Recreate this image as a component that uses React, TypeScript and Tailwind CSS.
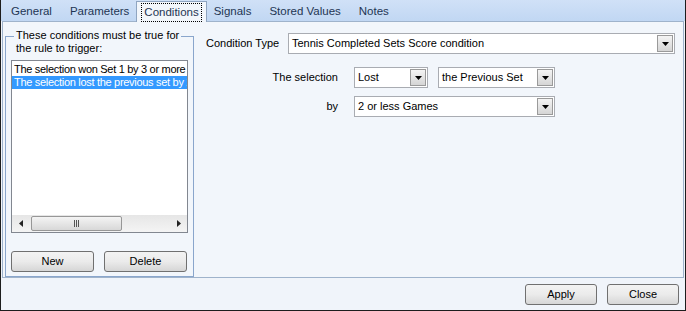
import React from 'react';

const tabs = ['General', 'Parameters', 'Conditions', 'Signals', 'Stored Values', 'Notes'];

function DownArrow() {
  return (
    <svg width="7" height="4" viewBox="0 0 7 4">
      <path d="M0 0h7L3.5 4z" fill="#000" />
    </svg>
  );
}

function Combo({ value, className }: { value: string; className: string }) {
  return (
    <div className={`flex items-center h-[21px] bg-white border border-[#a9acb2] ${className}`}>
      <span className="flex-1 pl-[3px] whitespace-nowrap overflow-hidden">{value}</span>
      <div className="w-[16px] h-[17px] mr-[1px] flex items-center justify-center border border-[#9a9a9a] bg-gradient-to-b from-[#f4f4f4] to-[#d5d5d5]">
        <DownArrow />
      </div>
    </div>
  );
}

function Button({ label, className }: { label: string; className: string }) {
  return (
    <button className={`h-[21px] rounded-[3px] border border-[#707070] bg-gradient-to-b from-[#f3f3f3] via-[#ebebeb] to-[#d6d6d6] text-black ${className}`}>
      {label}
    </button>
  );
}

export default function App() {
  return (
    <div className="w-[686px] h-[311px] flex flex-col border-l border-r border-b border-[#1d1d1d] bg-[#f0f4fa] font-['Liberation_Sans',Arial,sans-serif] text-[11px] leading-[13px] text-black overflow-hidden">
      {/* Tab strip */}
      <div className="h-[21px] flex items-end pl-[1px] bg-gradient-to-b from-[#d0e1f7] to-[#c1d7f3] text-[11.5px]">
        {tabs.map((t) =>
          t === 'Conditions' ? (
            <div
              key={t}
              className="relative z-10 -mb-[1px] h-[21px] mx-[-2px] px-[4px] flex items-center border-t border-l border-r border-[#8fa5c1] bg-[#f2f6fb] text-[#1e3553]"
            >
              <span className="px-[2px] py-[2px] border border-dotted border-black">{t}</span>
            </div>
          ) : (
            <div key={t} className="h-[19px] px-[9px] flex items-center text-[#1e3553]">
              {t}
            </div>
          )
        )}
      </div>

      {/* Tab page */}
      <div className="h-[257px] mx-[1px] flex border border-[#9fb3cb] bg-[#f2f6fb]">
        {/* Rule conditions group */}
        <div className="ml-[2px] mt-[14px] w-[189px] h-[241px] flex flex-col border border-[#8aa6cc]">
          <div className="-mt-[8px] ml-[8px] w-fit px-[2px] bg-[#f2f6fb]">
            These conditions must be true for
            <br />
            the rule to trigger:
          </div>
          <div className="ml-[5px] mt-[5px] w-[177px] h-[173px] flex flex-col border border-[#828790] bg-white">
            <div className="flex-1 pt-[2px] overflow-hidden tracking-[-0.3px]">
              <div className="h-[13px] pl-[2px] whitespace-nowrap overflow-hidden">The selection won Set 1 by 3 or more</div>
              <div className="h-[13px] pl-[2px] whitespace-nowrap overflow-hidden bg-[#3399ff] text-white">
                The selection lost the previous set by 2 or less Games
              </div>
            </div>
            {/* horizontal scrollbar */}
            <div className="h-[17px] flex items-center bg-gradient-to-b from-[#e6e6e6] to-[#f4f4f4]">
              <div className="w-[17px] flex items-center justify-center">
                <svg width="4" height="7" viewBox="0 0 4 7">
                  <path d="M4 0v7L0 3.5z" fill="#222" />
                </svg>
              </div>
              <div className="w-[91px] h-[15px] ml-[2px] flex items-center justify-center rounded-[2px] border border-[#979797] bg-gradient-to-b from-[#f4f4f4] to-[#d8d8d8]">
                <div className="flex gap-[1px]">
                  <div className="w-[1px] h-[7px] bg-[#555]" />
                  <div className="w-[1px] h-[7px] bg-[#555]" />
                  <div className="w-[1px] h-[7px] bg-[#555]" />
                </div>
              </div>
              <div className="flex-1" />
              <div className="w-[17px] flex items-center justify-center">
                <svg width="4" height="7" viewBox="0 0 4 7">
                  <path d="M0 0v7L4 3.5z" fill="#222" />
                </svg>
              </div>
            </div>
          </div>
          <div className="ml-[5px] mt-[18px] flex gap-[10px]">
            <Button label="New" className="w-[83px]" />
            <Button label="Delete" className="w-[83px]" />
          </div>
        </div>

        {/* Condition editor */}
        <div className="flex-1 pl-[12px] pt-[11px]">
          <div className="flex items-center">
            <span className="w-[82px]">Condition Type</span>
            <Combo value="Tennis Completed Sets Score condition" className="w-[387px]" />
          </div>
          <div className="mt-[13px] grid grid-cols-[132px_auto] gap-x-[16px] gap-y-[8px] items-center">
            <span className="text-right">The selection</span>
            <div className="flex gap-[10px]">
              <Combo value="Lost" className="w-[74px]" />
              <Combo value="the Previous Set" className="w-[117px]" />
            </div>
            <span className="text-right">by</span>
            <Combo value="2 or less Games" className="w-[201px]" />
          </div>
        </div>
      </div>

      {/* Footer */}
      <div className="flex-1 flex justify-end items-start pt-[6px] pr-[6px] gap-[10px]">
        <Button label="Apply" className="w-[72px]" />
        <Button label="Close" className="w-[72px]" />
      </div>
    </div>
  );
}
